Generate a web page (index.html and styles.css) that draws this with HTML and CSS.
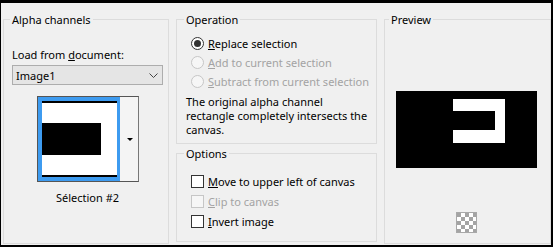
FILE: index.html
```html
<!DOCTYPE html>
<html lang="en">
<head>
  <meta charset="UTF-8" />
  <title>Load Selection From Alpha Channel</title>
  <link rel="stylesheet" href="styles.css">
</head>
<body>
  <div class="dialog">
    <div class="group alpha">
      <div class="group-title">Alpha channels</div>
      <div class="field-label">Load from <u>d</u>ocument:</div>
      <div class="combo">
        <span>Image1</span>
        <svg class="chevron" width="9" height="5" viewBox="0 0 9 5"><path d="M0.5 0.5 L4.5 4.5 L8.5 0.5" fill="none" stroke="#444" stroke-width="1"/></svg>
      </div>
      <div class="thumb-picker">
        <div class="thumb">
          <svg width="75" height="76" viewBox="0 0 75 76">
            <rect width="75" height="76" fill="#fff"/>
            <rect x="0" y="0" width="75" height="2" fill="#000"/>
            <rect x="0" y="22" width="59" height="32" fill="#000"/>
            <rect x="0" y="74" width="75" height="2" fill="#000"/>
          </svg>
        </div>
        <div class="thumb-arrow"><span class="tri"></span></div>
      </div>
      <div class="thumb-name">Sélection #2</div>
    </div>

    <div class="middle">
      <div class="group operation">
        <div class="group-title">Operation</div>
        <div class="choices">
          <div class="choice"><span class="radio checked"></span><span><u>R</u>eplace selection</span></div>
          <div class="choice disabled"><span class="radio"></span><span><u>A</u>dd to current selection</span></div>
          <div class="choice disabled"><span class="radio"></span><span><u>S</u>ubtract from current selection</span></div>
        </div>
        <p class="note">The original alpha channel<br>rectangle completely intersects the<br>canvas.</p>
      </div>

      <div class="group options">
        <div class="group-title">Options</div>
        <div class="choices checks">
          <div class="choice"><span class="box"></span><span><u>M</u>ove to upper left of canvas</span></div>
          <div class="choice disabled"><span class="box"></span><span><u>C</u>lip to canvas</span></div>
          <div class="choice"><span class="box"></span><span><u>I</u>nvert image</span></div>
        </div>
      </div>
    </div>

    <div class="group preview">
      <div class="group-title">Preview</div>
      <svg class="preview-img" width="141" height="77" viewBox="0 0 141 77">
        <rect width="141" height="77" fill="#000"/>
        <rect x="57" y="8" width="52" height="44" fill="#fff"/>
        <rect x="57" y="20" width="42" height="19" fill="#000"/>
      </svg>
      <div class="checker">
        <svg width="19" height="19" viewBox="0 0 19 19">
          <rect width="19" height="19" fill="#fff"/>
          <path d="M0 0h4v4H0zM8 0h4v4H8zM16 0h3v4h-3zM4 4h4v4H4zM12 4h4v4h-4zM0 8h4v4H0zM8 8h4v4H8zM16 8h3v4h-3zM4 12h4v4H4zM12 12h4v4h-4zM0 16h4v3H0zM8 16h4v3H8zM16 16h3v3h-3z" fill="#a4a4a4"/>
        </svg>
      </div>
    </div>
  </div>
</body>
</html>
```

FILE: styles.css
```css
body {
  margin: 0;
  background: #fff;
}

.dialog {
  width: 553px;
  height: 247px;
  box-sizing: border-box;
  border: solid #000;
  border-width: 3px 2px 2px 1px;
  background: #f0f0f0;
  padding: 16px 0 1px 2px;
  display: grid;
  grid-template-columns: 166px 201px 167px;
  column-gap: 7px;
  font: 11px/15px "Noto Sans", sans-serif;
  color: #000;
}

.group {
  border: 1px solid #dcdcdc;
  box-sizing: border-box;
}

.group-title {
  width: fit-content;
  margin: -8px 0 0 6px;
  padding: 0 2px;
  background: #f0f0f0;
}

/* alpha channels */
.field-label {
  margin: 20px 0 0 8px;
}

.combo {
  margin: 3px 5px 0 8px;
  height: 20px;
  box-sizing: border-box;
  border: 1px solid #adadad;
  background: #e5e5e5;
  display: flex;
  align-items: center;
  justify-content: space-between;
  padding: 0 4px 0 3px;
}

.chevron {
  display: block;
}

.thumb-picker {
  margin: 11px 0 0 33px;
  width: 102px;
  height: 86px;
  box-sizing: border-box;
  border: 1px solid #555;
  border-right-color: #777;
  display: flex;
}

.thumb {
  width: 82px;
  height: 84px;
  box-sizing: border-box;
  border: 4px solid #3d9bf0;
  border-right-width: 3px;
}

.thumb svg {
  display: block;
}

.thumb-arrow {
  flex: 1;
  background: #f4f4f4;
  display: flex;
  align-items: center;
  justify-content: center;
}

.tri {
  width: 0;
  height: 0;
  border-left: 3px solid transparent;
  border-right: 3px solid transparent;
  border-top: 3px solid #000;
  margin-left: 1px;
}

.thumb-name {
  margin: 8px 5px 0 8px;
  text-align: center;
}

/* operation / options */
.middle {
  display: flex;
  flex-direction: column;
}

.operation {
  height: 125px;
}

.operation .group-title,
.options .group-title {
  margin-left: 7px;
}

.options {
  height: 89px;
  margin-top: 9px;
}

.choices {
  margin-top: 7px;
  padding-left: 14px;
}

.checks {
  margin-top: 10px;
}

.choice {
  height: 19px;
  display: flex;
  align-items: center;
  gap: 4px;
}

.checks .choice {
  height: 20px;
}

.choice.disabled {
  color: #a3a3a3;
}

.radio {
  width: 13px;
  height: 13px;
  box-sizing: border-box;
  border: 1px solid #333;
  border-radius: 50%;
  background: #fff;
  display: flex;
  align-items: center;
  justify-content: center;
}

.radio.checked::after {
  content: "";
  width: 7px;
  height: 7px;
  border-radius: 50%;
  background: #333;
}

.box {
  width: 13px;
  height: 13px;
  box-sizing: border-box;
  border: 1px solid #333;
  background: #fff;
}

.disabled .radio,
.disabled .box {
  border-color: #c6c6c6;
  background: #f6f6f6;
}

.note {
  margin: 4px 0 0 9px;
  line-height: 14px;
}

/* preview */
.preview .group-title {
  margin-left: 4px;
}

.preview-img {
  display: block;
  margin: 64px 0 0 11px;
}

.checker {
  margin: 44px 0 0 71px;
  width: 21px;
  height: 21px;
  box-sizing: border-box;
  border: 1px solid #a8a8a8;
}

.checker svg {
  display: block;
}
```
